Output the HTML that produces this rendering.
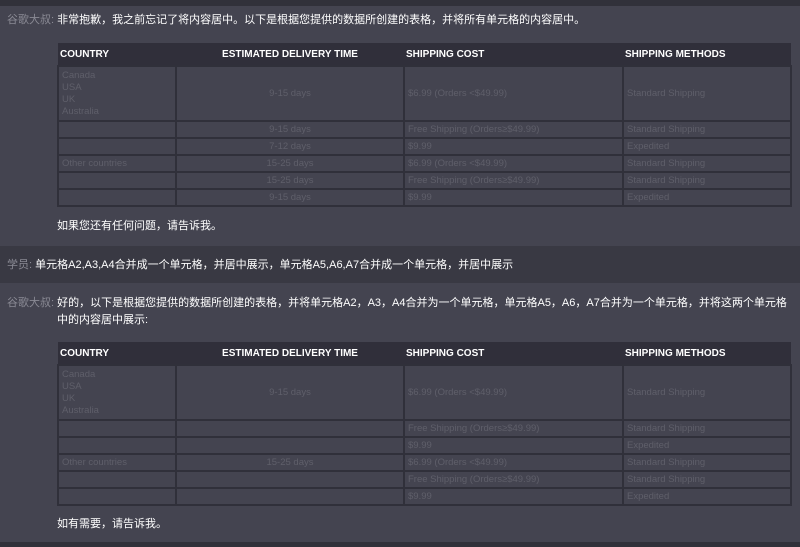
<!DOCTYPE html><html><head><meta charset="utf-8"><style>
*{margin:0;padding:0;box-sizing:border-box}
body{width:800px;height:547px;background:#444450;font-family:"Liberation Sans","Noto Sans CJK SC",sans-serif;position:relative;overflow:hidden;color:#fff}
.bar{position:absolute;left:0;width:800px;background:#31313a}
.t{position:absolute;font-size:11px;line-height:16px;white-space:nowrap}
.g{color:#8a8a94}
table{position:absolute;left:57px;width:733px;border-collapse:collapse;font-size:9.5px;table-layout:fixed}
th{background:#302f3a;color:#fff;font-weight:bold;text-align:left;height:23px;padding:0 2px;font-size:10px}
td{border:2px solid #30303a;color:#5f5f6a;height:17px;padding:0 3px;line-height:12px}
td.c{text-align:center}
</style></head><body>
<div class="bar" style="top:0;height:6px"></div>
<div class="t" style="left:7px;top:12px"><span class="g">谷歌大叔:</span> 非常抱歉，我之前忘记了将内容居中。以下是根据您提供的数据所创建的表格，并将所有单元格的内容居中。</div>
<table style="top:43px">
<colgroup><col style="width:118px"><col style="width:228px"><col style="width:219px"><col style="width:168px"></colgroup>
<tr><th>COUNTRY</th><th style="text-align:center">ESTIMATED DELIVERY TIME</th><th>SHIPPING COST</th><th>SHIPPING METHODS</th></tr>
<tr><td style="height:55px">Canada<br>USA<br>UK<br>Australia</td><td class="c">9-15 days</td><td>$6.99 (Orders &lt;$49.99)</td><td>Standard Shipping</td></tr>
<tr><td></td><td class="c">9-15 days</td><td>Free Shipping (Orders≥$49.99)</td><td>Standard Shipping</td></tr>
<tr><td></td><td class="c">7-12 days</td><td>$9.99</td><td>Expedited</td></tr>
<tr><td>Other countries</td><td class="c">15-25 days</td><td>$6.99 (Orders &lt;$49.99)</td><td>Standard Shipping</td></tr>
<tr><td></td><td class="c">15-25 days</td><td>Free Shipping (Orders≥$49.99)</td><td>Standard Shipping</td></tr>
<tr><td></td><td class="c">9-15 days</td><td>$9.99</td><td>Expedited</td></tr>
</table>
<div class="t" style="left:57px;top:218px">如果您还有任何问题，请告诉我。</div>
<div class="bar" style="top:246px;height:37px;background:#393943"></div>
<div class="t" style="left:7px;top:257px"><span class="g">学员:</span> 单元格A2,A3,A4合并成一个单元格，并居中展示，单元格A5,A6,A7合并成一个单元格，并居中展示</div>
<div class="t" style="left:7px;top:295px"><span class="g">谷歌大叔:</span> 好的，以下是根据您提供的数据所创建的表格，并将单元格A2，A3，A4合并为一个单元格，单元格A5，A6，A7合并为一个单元格，并将这两个单元格</div>
<div class="t" style="left:57px;top:312px">中的内容居中展示:</div>
<table style="top:342px">
<colgroup><col style="width:118px"><col style="width:228px"><col style="width:219px"><col style="width:168px"></colgroup>
<tr><th>COUNTRY</th><th style="text-align:center">ESTIMATED DELIVERY TIME</th><th>SHIPPING COST</th><th>SHIPPING METHODS</th></tr>
<tr><td style="height:55px">Canada<br>USA<br>UK<br>Australia</td><td class="c">9-15 days</td><td>$6.99 (Orders &lt;$49.99)</td><td>Standard Shipping</td></tr>
<tr><td></td><td></td><td>Free Shipping (Orders≥$49.99)</td><td>Standard Shipping</td></tr>
<tr><td></td><td></td><td>$9.99</td><td>Expedited</td></tr>
<tr><td>Other countries</td><td class="c">15-25 days</td><td>$6.99 (Orders &lt;$49.99)</td><td>Standard Shipping</td></tr>
<tr><td></td><td></td><td>Free Shipping (Orders≥$49.99)</td><td>Standard Shipping</td></tr>
<tr><td></td><td></td><td>$9.99</td><td>Expedited</td></tr>
</table>
<div class="t" style="left:57px;top:516px">如有需要，请告诉我。</div>
<div class="bar" style="top:542px;height:5px"></div>
</body></html>
